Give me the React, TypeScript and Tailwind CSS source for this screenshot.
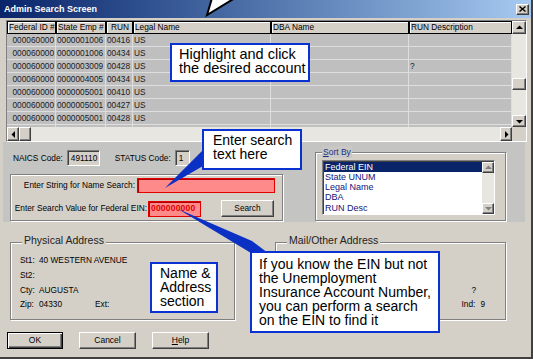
import React from 'react';

const ui = "font-['Liberation_Sans',Arial,sans-serif]";
const raised =
  'bg-[#d4d0c8] border border-t-white border-l-white border-r-[#404040] border-b-[#404040] shadow-[inset_-1px_-1px_0_#808080]';
const sunken =
  'border border-t-[#808080] border-l-[#808080] border-r-white border-b-white shadow-[inset_1px_1px_0_#404040]';
const etched = 'border border-[#808080] shadow-[inset_1px_1px_0_#fff,1px_1px_0_#fff]';

const cols = [49, 50, 27, 138, 138, 103];
const headers = ['Federal ID #', 'State Emp #', 'RUN', 'Legal Name', 'DBA Name', 'RUN Description'];

const rows = [
  ['000060000', '0000001006', '00416', 'US', '', ''],
  ['000060000', '0000001006', '00434', 'US', '', ''],
  ['000060000', '0000003009', '00428', 'US', '', '?'],
  ['000060000', '0000004005', '00434', 'US', '', ''],
  ['000060000', '0000005001', '00410', 'US', '', ''],
  ['000060000', '0000005001', '00427', 'US', '', ''],
  ['000060000', '0000005001', '00428', 'US', '', ''],
  ['', '', '', '', '', ''],
];

type Dir = 'up' | 'down' | 'left' | 'right';

const Tri = ({ dir, color = '#000' }: { dir: Dir; color?: string }) => {
  const pts: Record<Dir, string> = {
    up: '0,5 3.5,1.5 7,5',
    down: '0,2 3.5,5.5 7,2',
    left: '5,0 1.5,3.5 5,7',
    right: '2,0 5.5,3.5 2,7',
  };
  return (
    <svg width="7" height="7" viewBox="0 0 7 7">
      <polygon points={pts[dir]} fill={color} />
    </svg>
  );
};

const ScrollBtn = ({ dir, className, color }: { dir: Dir; className: string; color?: string }) => (
  <div className={`${raised} ${className} flex items-center justify-center shrink-0`}>
    <Tri dir={dir} color={color} />
  </div>
);

const DataGrid = () => (
  <div className={`mt-[2px] ml-[6px] w-[521px] h-[122px] ${sunken} flex flex-col`}>
    <div className="flex h-[106px]">
      <div className="w-[505px] flex flex-col overflow-hidden">
        <div className="flex h-[13px] shrink-0">
          {headers.map((h, i) => (
            <div
              key={h}
              style={{ width: cols[i] }}
              className={`h-[13px] shrink-0 border border-black bg-[#d4d0c8] shadow-[inset_1px_1px_0_#fff] px-[1px] text-[8.3px] leading-[11px] whitespace-nowrap overflow-hidden ${
                i === 2 ? 'text-right pr-[3px]' : ''
              }`}
            >
              {h}
            </div>
          ))}
        </div>
        {rows.map((r, ri) => (
          <div key={ri} className="flex h-[13px] shrink-0 bg-[#bfbfbf] border-b border-[#dedede]">
            {r.map((c, ci) => (
              <div
                key={ci}
                style={{ width: cols[ci] }}
                className={`shrink-0 border-r border-[#dedede] px-[1px] text-[8.3px] leading-[12px] text-[#1a1a1a] whitespace-nowrap overflow-hidden ${
                  ci === 0 ? 'text-right' : ''
                }`}
              >
                {c}
              </div>
            ))}
          </div>
        ))}
      </div>
      <div className="w-[14px] flex flex-col">
        <ScrollBtn dir="up" className="h-[13px] w-[14px]" />
        <div className="flex-1 bg-[#e8e6e1] flex flex-col">
          <div className={`${raised} mt-[44px] h-[12px] w-[14px]`} />
        </div>
        <ScrollBtn dir="down" className="h-[12px] w-[14px]" />
      </div>
    </div>
    <div className="flex h-[14px]">
      <ScrollBtn dir="left" className="w-[12px] h-[14px]" />
      <div className={`${raised} w-[12px] h-[14px]`} />
      <div className="flex-1 bg-[#e8e6e1]" />
      <ScrollBtn dir="right" className="w-[12px] h-[14px]" />
      <div className="w-[14px] bg-[#d4d0c8]" />
    </div>
  </div>
);

const SearchArea = () => (
  <div className="ml-[3px] w-[522px] h-[80px] shrink-0 bg-[#c4c4c2] flex pl-[7px]">
    <div className="w-[273px] flex flex-col">
      <div className="mt-[8px] h-[16px] flex items-center pl-[3px] text-[8.3px] whitespace-nowrap">
        <span>NAICS Code:</span>
        <div className={`ml-[4px] w-[33px] h-[16px] bg-[#d4d0c8] ${sunken} flex items-center pl-[3px] leading-none`}>491110</div>
        <span className="ml-[15px]">STATUS Code:</span>
        <div className={`ml-[4px] w-[15px] h-[16px] bg-[#d4d0c8] ${sunken} flex items-center pl-[3px] leading-none`}>1</div>
      </div>
      <div className={`mt-[8px] h-[47px] bg-[#d4d0c8] ${etched} flex flex-col text-[8.3px] whitespace-nowrap`}>
        <div className="mt-[3px] h-[15px] flex items-center justify-end pr-[7px]">
          <span>Enter String for Name Search:</span>
          <div className="ml-[2px] w-[138px] h-[15px] bg-[#ff8a8a] border border-[#e00000] shadow-[inset_1px_1px_0_#b00000]" />
        </div>
        <div className="mt-[7px] h-[17px] flex items-center justify-end pr-[8px]">
          <span>Enter Search Value for Federal EIN:</span>
          <div className="ml-[1px] w-[53px] h-[16px] bg-[#ff8a8a] border border-[#e00000] shadow-[inset_1px_1px_0_#b00000] flex items-center pl-[2px] font-bold text-[#e00000] text-[8.5px] tracking-[0.2px] leading-none">
            000000000
          </div>
          <div className={`${raised} ml-[20px] w-[53px] h-[17px] flex items-center justify-center`}>Search</div>
        </div>
      </div>
    </div>
    <div className={`ml-[32px] mt-[10px] w-[191px] h-[69px] bg-[#d4d0c8] ${etched} relative`}>
      <span className="absolute -top-[7px] left-[6px] px-[1px] bg-[#c9c8c4] text-[8.5px] leading-[12px] text-[#1a2f8a]">
        <span className="underline">S</span>ort By
      </span>
      <div className={`ml-[6px] mt-[7px] w-[173px] h-[55px] bg-white ${sunken} flex`}>
        <div className="flex-1 pl-[1px] pt-[1px] text-[9px] leading-[10.2px] text-[#14147a] whitespace-nowrap">
          <div className="bg-[#0a246a] text-white pl-[1px] h-[10px]">Federal EIN</div>
          <div className="pl-[1px]">State UNUM</div>
          <div className="pl-[1px]">Legal Name</div>
          <div className="pl-[1px]">DBA</div>
          <div className="pl-[1px]">RUN Desc</div>
        </div>
        <div className="w-[12px] flex flex-col bg-[#e8e6e1] mt-[1px]">
          <ScrollBtn dir="up" className="w-[12px] h-[11px]" color="#808080" />
          <div className="flex-1" />
          <ScrollBtn dir="down" className="w-[12px] h-[11px]" color="#808080" />
        </div>
      </div>
    </div>
  </div>
);

const AddressArea = () => (
  <div className="flex pl-[10px] mt-[20px]">
    <div className={`w-[225px] h-[78px] ${etched} relative`}>
      <span className="absolute -top-[9px] left-[11px] px-[2px] bg-[#d4d0c8] text-[10.5px] leading-[13px] text-[#222]">
        Physical Address
      </span>
      <div className="pt-[10px] pl-[9px] text-[8.3px] flex flex-col whitespace-nowrap">
        <div className="h-[14.7px] flex items-center">
          <span className="w-[19px]">St1:</span>
          <span>40 WESTERN AVENUE</span>
        </div>
        <div className="h-[14.7px] flex items-center">
          <span className="w-[19px]">St2:</span>
        </div>
        <div className="h-[14.7px] flex items-center">
          <span className="w-[19px]">Cty:</span>
          <span>AUGUSTA</span>
        </div>
        <div className="h-[14.7px] flex items-center">
          <span className="w-[19px]">Zip:</span>
          <span className="w-[56px]">04330</span>
          <span>Ext:</span>
        </div>
      </div>
    </div>
    <div className={`ml-[40px] w-[231px] h-[78px] ${etched} relative`}>
      <span className="absolute -top-[9px] left-[11px] px-[2px] bg-[#d4d0c8] text-[10.5px] leading-[13px] text-[#222]">
        Mail/Other Address
      </span>
      <div className="pt-[39.4px] pr-[20px] text-[8.3px] flex flex-col items-end">
        <div className="h-[14.7px] flex items-center mr-[9px]">?</div>
        <div className="h-[14.7px] flex items-center">
          <span>Ind:</span>
          <span className="ml-[5px]">9</span>
        </div>
      </div>
    </div>
  </div>
);

const Buttons = () => (
  <div className="flex pl-[7px] mt-[12px] text-[8.5px]">
    <div className="w-[56px] h-[17px] border border-black bg-[#d4d0c8] shadow-[inset_1px_1px_0_#fff,inset_-1px_-1px_0_#404040,inset_-2px_-2px_0_#808080] flex items-center justify-center">
      OK
    </div>
    <div className={`${raised} ml-[16px] w-[57px] h-[17px] flex items-center justify-center`}>Cancel</div>
    <div className={`${raised} ml-[16px] w-[57px] h-[17px] flex items-center justify-center`}>
      <span>
        <span className="underline">H</span>elp
      </span>
    </div>
  </div>
);

const callout = "absolute bg-white border-2 border-[#0a32d2] font-['Liberation_Sans',Arial,sans-serif] text-black whitespace-nowrap";

export default function App() {
  return (
    <div
      className={`relative w-[533px] h-[359px] overflow-hidden bg-[#d4d0c8] border-r-2 border-b-2 border-[#404040] flex flex-col ${ui} text-black`}
    >
      <div className="h-[18px] shrink-0 bg-linear-to-r from-[#0a246a] to-[#a6caf0] flex items-center pl-[4px] pr-[2px]">
        <span className="text-white font-bold text-[9px] leading-none">Admin Search Screen</span>
        <div className={`ml-auto w-[13px] h-[11px] ${raised} flex items-center justify-center`}>
          <svg width="7" height="6" viewBox="0 0 7 6">
            <path d="M0.5 0.5 L6.5 5.5 M6.5 0.5 L0.5 5.5" stroke="#000" strokeWidth="1.4" />
          </svg>
        </div>
      </div>

      <DataGrid />
      <SearchArea />
      <AddressArea />
      <Buttons />

      <svg className="absolute inset-0 pointer-events-none" width="533" height="359" viewBox="0 0 533 359">
        <polygon points="203,150 203,166 165,188" fill="#0b30c4" />
        <polygon points="178,209 252,241 268,253 251,253" fill="#0b30c4" />
        <polygon points="207,15 212,-2 235,-2" fill="#fff" stroke="#000" strokeWidth="2" strokeLinejoin="miter" />
      </svg>

      <div className={`${callout} left-[170px] top-[43px] w-[140px] h-[39px] pl-[7px] pt-[3px] text-[14.5px] leading-[13.5px]`}>
        Highlight and click
        <br />
        the desired account
      </div>
      <div className={`${callout} left-[202px] top-[129px] w-[100px] h-[41px] pl-[9px] pt-[3px] text-[14px] leading-[13.5px]`}>
        Enter search
        <br />
        text here
      </div>
      <div className={`${callout} left-[150px] top-[262px] w-[68px] h-[51px] pl-[8px] pt-[2px] text-[14px] leading-[14px]`}>
        Name &amp;
        <br />
        Address
        <br />
        section
      </div>
      <div className={`${callout} left-[250px] top-[251px] w-[190px] h-[82px] pl-[7px] pt-[4px] text-[14px] leading-[14px]`}>
        If you know the EIN but not
        <br />
        the Unemployment
        <br />
        Insurance Account Number,
        <br />
        you can perform a search
        <br />
        on the EIN to find it
      </div>
    </div>
  );
}
